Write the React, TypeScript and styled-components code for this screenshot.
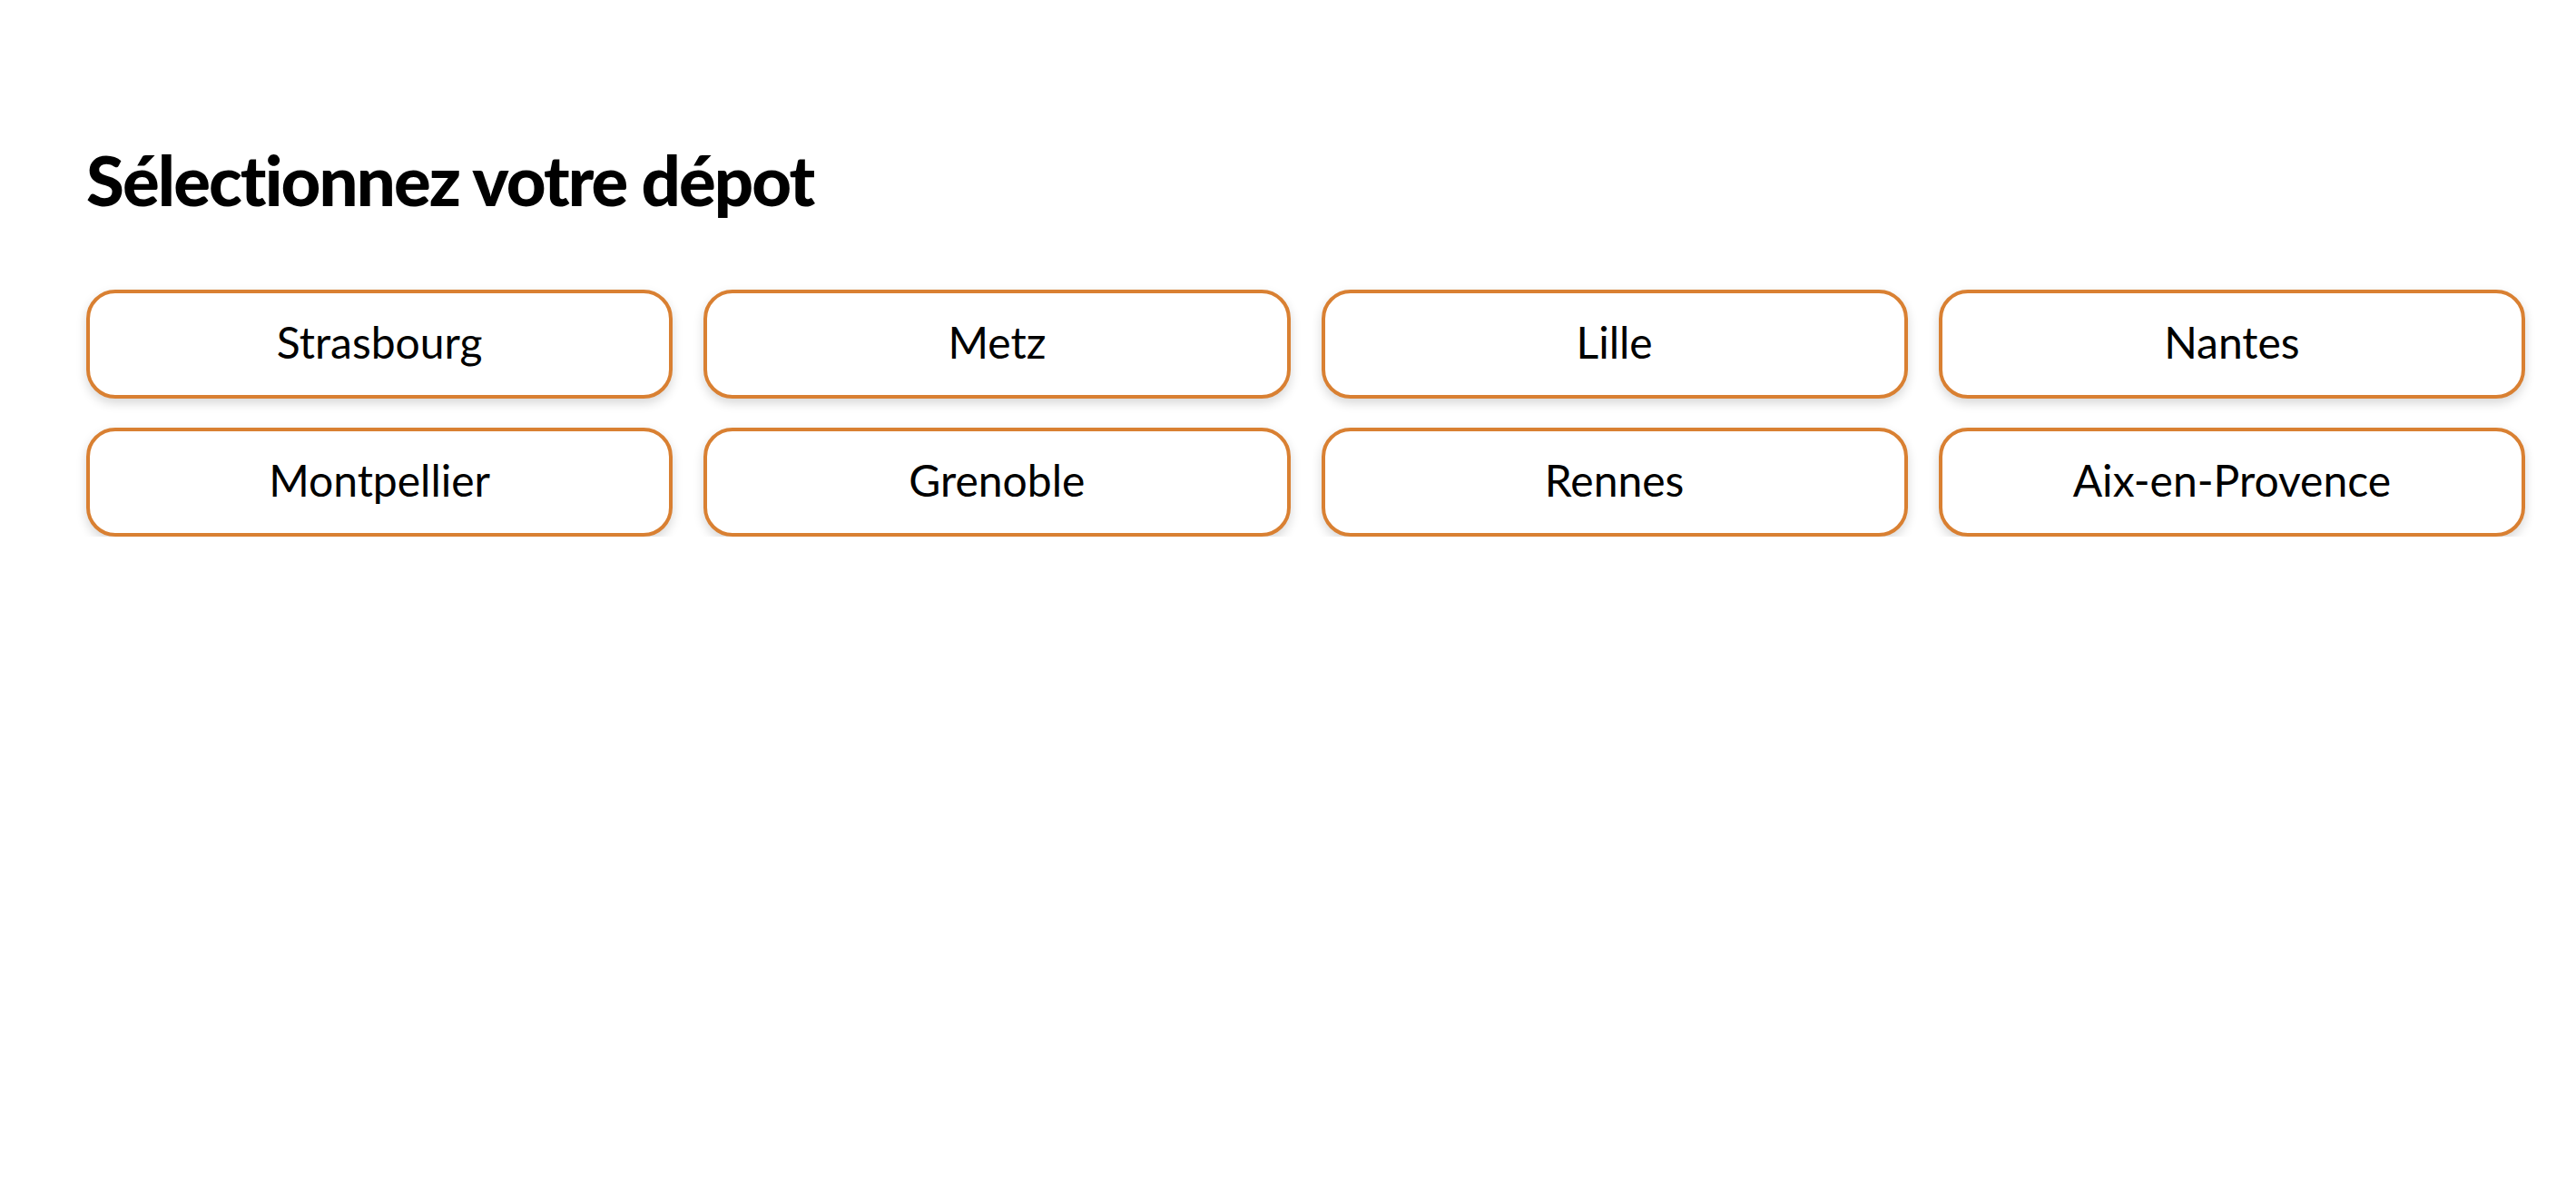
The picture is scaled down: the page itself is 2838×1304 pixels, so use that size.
import React from "react";
import styled, { createGlobalStyle } from "styled-components";

const GlobalStyle = createGlobalStyle`
  html, body {
    margin: 0;
    padding: 0;
    background: #ffffff;
  }
  body {
    font-family: Lato, "Noto Sans", sans-serif;
    color: #000000;
  }
`;

const Page = styled.main`
  box-sizing: border-box;
  width: 100%;
  padding: 152px 56px 0 95px;
`;

const Title = styled.h1`
  margin: 0 0 76px 0;
  font-family: Lato, "Noto Sans", sans-serif;
  font-weight: 900;
  font-size: 76px;
  line-height: 1.2;
  letter-spacing: -1.9px;
  color: #000000;
`;

const Grid = styled.div`
  display: grid;
  grid-template-columns: repeat(4, 1fr);
  column-gap: 34px;
  row-gap: 32px;
`;

const DepotButton = styled.button`
  box-sizing: border-box;
  height: 120px;
  display: flex;
  align-items: center;
  justify-content: center;
  background: #ffffff;
  border: 4px solid #d98032;
  border-radius: 32px;
  box-shadow: 0 5px 12px rgba(0, 0, 0, 0.16);
  font-family: Lato, "Noto Sans", sans-serif;
  font-weight: 400;
  font-size: 48px;
  color: #000000;
  cursor: pointer;
  padding: 0 16px 6px;
`;

const depots = [
  "Strasbourg",
  "Metz",
  "Lille",
  "Nantes",
  "Montpellier",
  "Grenoble",
  "Rennes",
  "Aix-en-Provence",
];

export default function App() {
  return (
    <>
      <GlobalStyle />
      <Page>
        <Title>Sélectionnez votre dépot</Title>
        <Grid>
          {depots.map((d) => (
            <DepotButton key={d} type="button">
              {d}
            </DepotButton>
          ))}
        </Grid>
      </Page>
    </>
  );
}
